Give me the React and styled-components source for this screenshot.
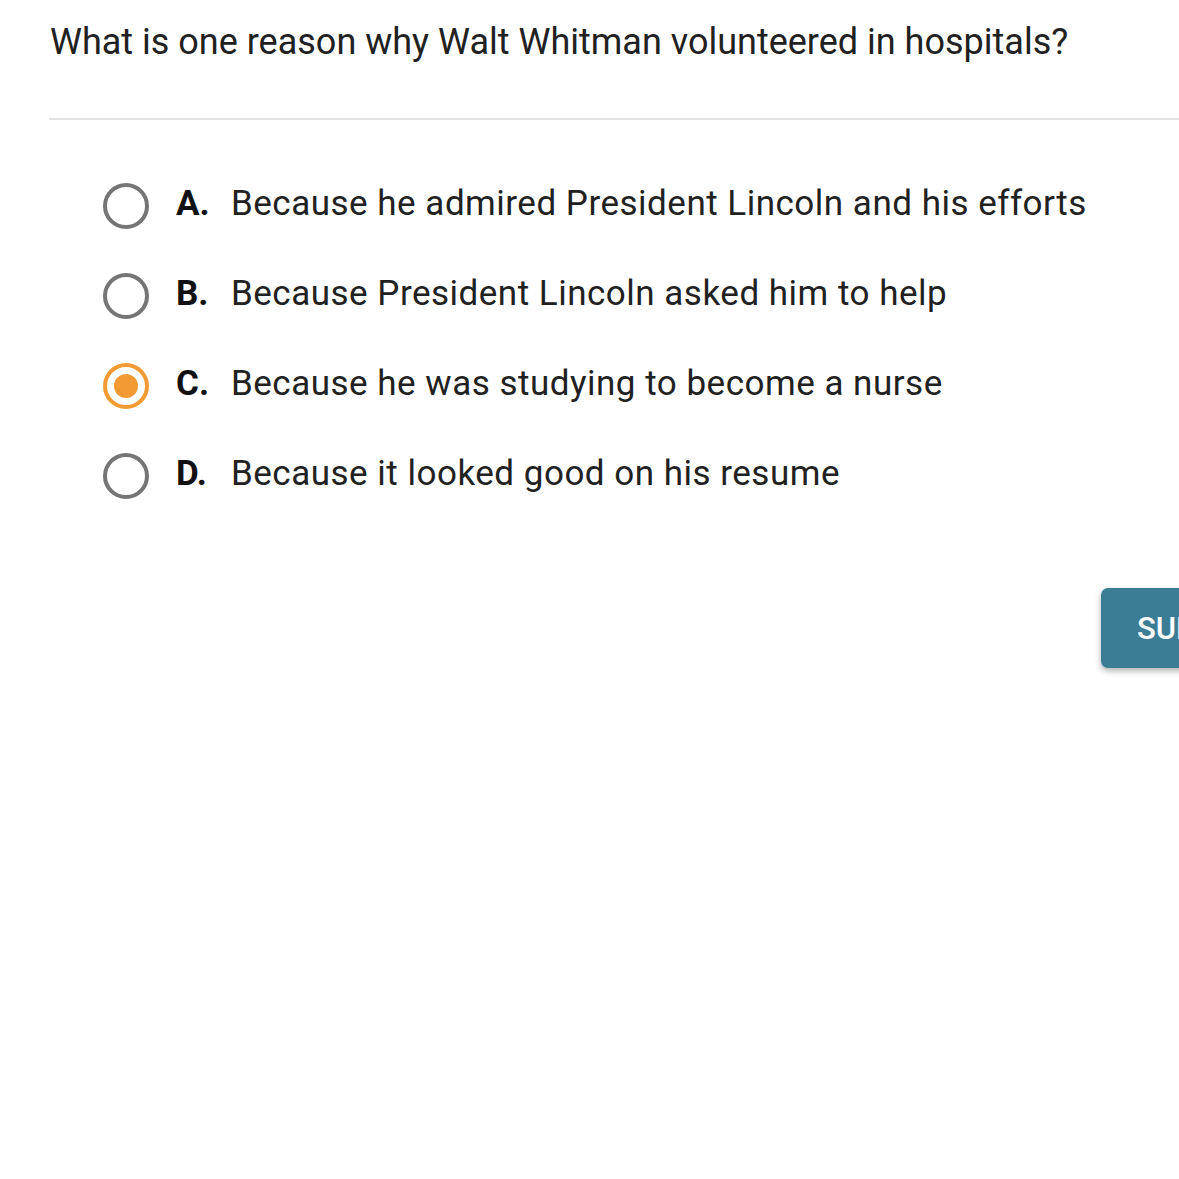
import styled, { createGlobalStyle } from "styled-components";

const GlobalStyle = createGlobalStyle`
    html, body {
        margin: 0;
        padding: 0;
        background: #fff;
        overflow: hidden;
    }
    body {
        font-family: Roboto, "Liberation Sans", sans-serif;
        color: #212121;
    }
`;

const Page = styled.div`
    width: 1340px;
    min-height: 1179px;
`;

const Question = styled.h1`
    margin: 0;
    padding: 21px 0 0 50px;
    font-size: 36px;
    font-weight: normal;
    line-height: 42px;
    color: #212121;
`;

const Divider = styled.hr`
    margin: 55px 0 0 49px;
    border: none;
    border-top: 2px solid #e2e2e2;
`;

const Options = styled.ul`
    list-style: none;
    margin: 0;
    padding: 63px 0 0 103px;
    display: flex;
    flex-direction: column;
    gap: 44px;
`;

const Option = styled.li`
    display: flex;
    align-items: center;
    height: 46px;
    cursor: pointer;
`;

const Radio = styled.span`
    box-sizing: border-box;
    width: 46px;
    height: 46px;
    border-radius: 50%;
    border: 4px solid ${p => (p.checked ? "#f29a33" : "#757575")};
    display: flex;
    align-items: center;
    justify-content: center;
    flex-shrink: 0;
    &::after {
        content: "";
        width: 24px;
        height: 24px;
        border-radius: 50%;
        background: #f29a33;
        display: ${p => (p.checked ? "block" : "none")};
    }
`;

const Letter = styled.span`
    font-weight: bold;
    font-size: 35px;
    margin-left: 27px;
    width: 55px;
    padding-bottom: 6px;
    color: #111;
`;

const Label = styled.span`
    font-size: 35px;
    letter-spacing: 0.5px;
    padding-bottom: 6px;
    color: #212121;
`;

const Footer = styled.div`
    display: flex;
    justify-content: flex-end;
    padding: 89px 29px 0 0;
`;

const SubmitButton = styled.button`
    width: 210px;
    height: 80px;
    border: none;
    border-radius: 7px;
    background: #3b7d95;
    color: #fff;
    font-family: Roboto, "Liberation Sans", sans-serif;
    font-size: 31px;
    font-weight: 500;
    text-align: left;
    padding-left: 36px;
    box-shadow: 0 3px 6px rgba(0, 0, 0, 0.3);
`;

const options = [
    { letter: "A.", text: "Because he admired President Lincoln and his efforts" },
    { letter: "B.", text: "Because President Lincoln asked him to help" },
    { letter: "C.", text: "Because he was studying to become a nurse", checked: true },
    { letter: "D.", text: "Because it looked good on his resume" },
];

export default function App() {
    return (
        <Page>
            <GlobalStyle />
            <Question>What is one reason why Walt Whitman volunteered in hospitals?</Question>
            <Divider />
            <Options>
                {options.map(o => (
                    <Option key={o.letter}>
                        <Radio checked={o.checked} />
                        <Letter>{o.letter}</Letter>
                        <Label>{o.text}</Label>
                    </Option>
                ))}
            </Options>
            <Footer>
                <SubmitButton>SUBMIT</SubmitButton>
            </Footer>
        </Page>
    );
}
